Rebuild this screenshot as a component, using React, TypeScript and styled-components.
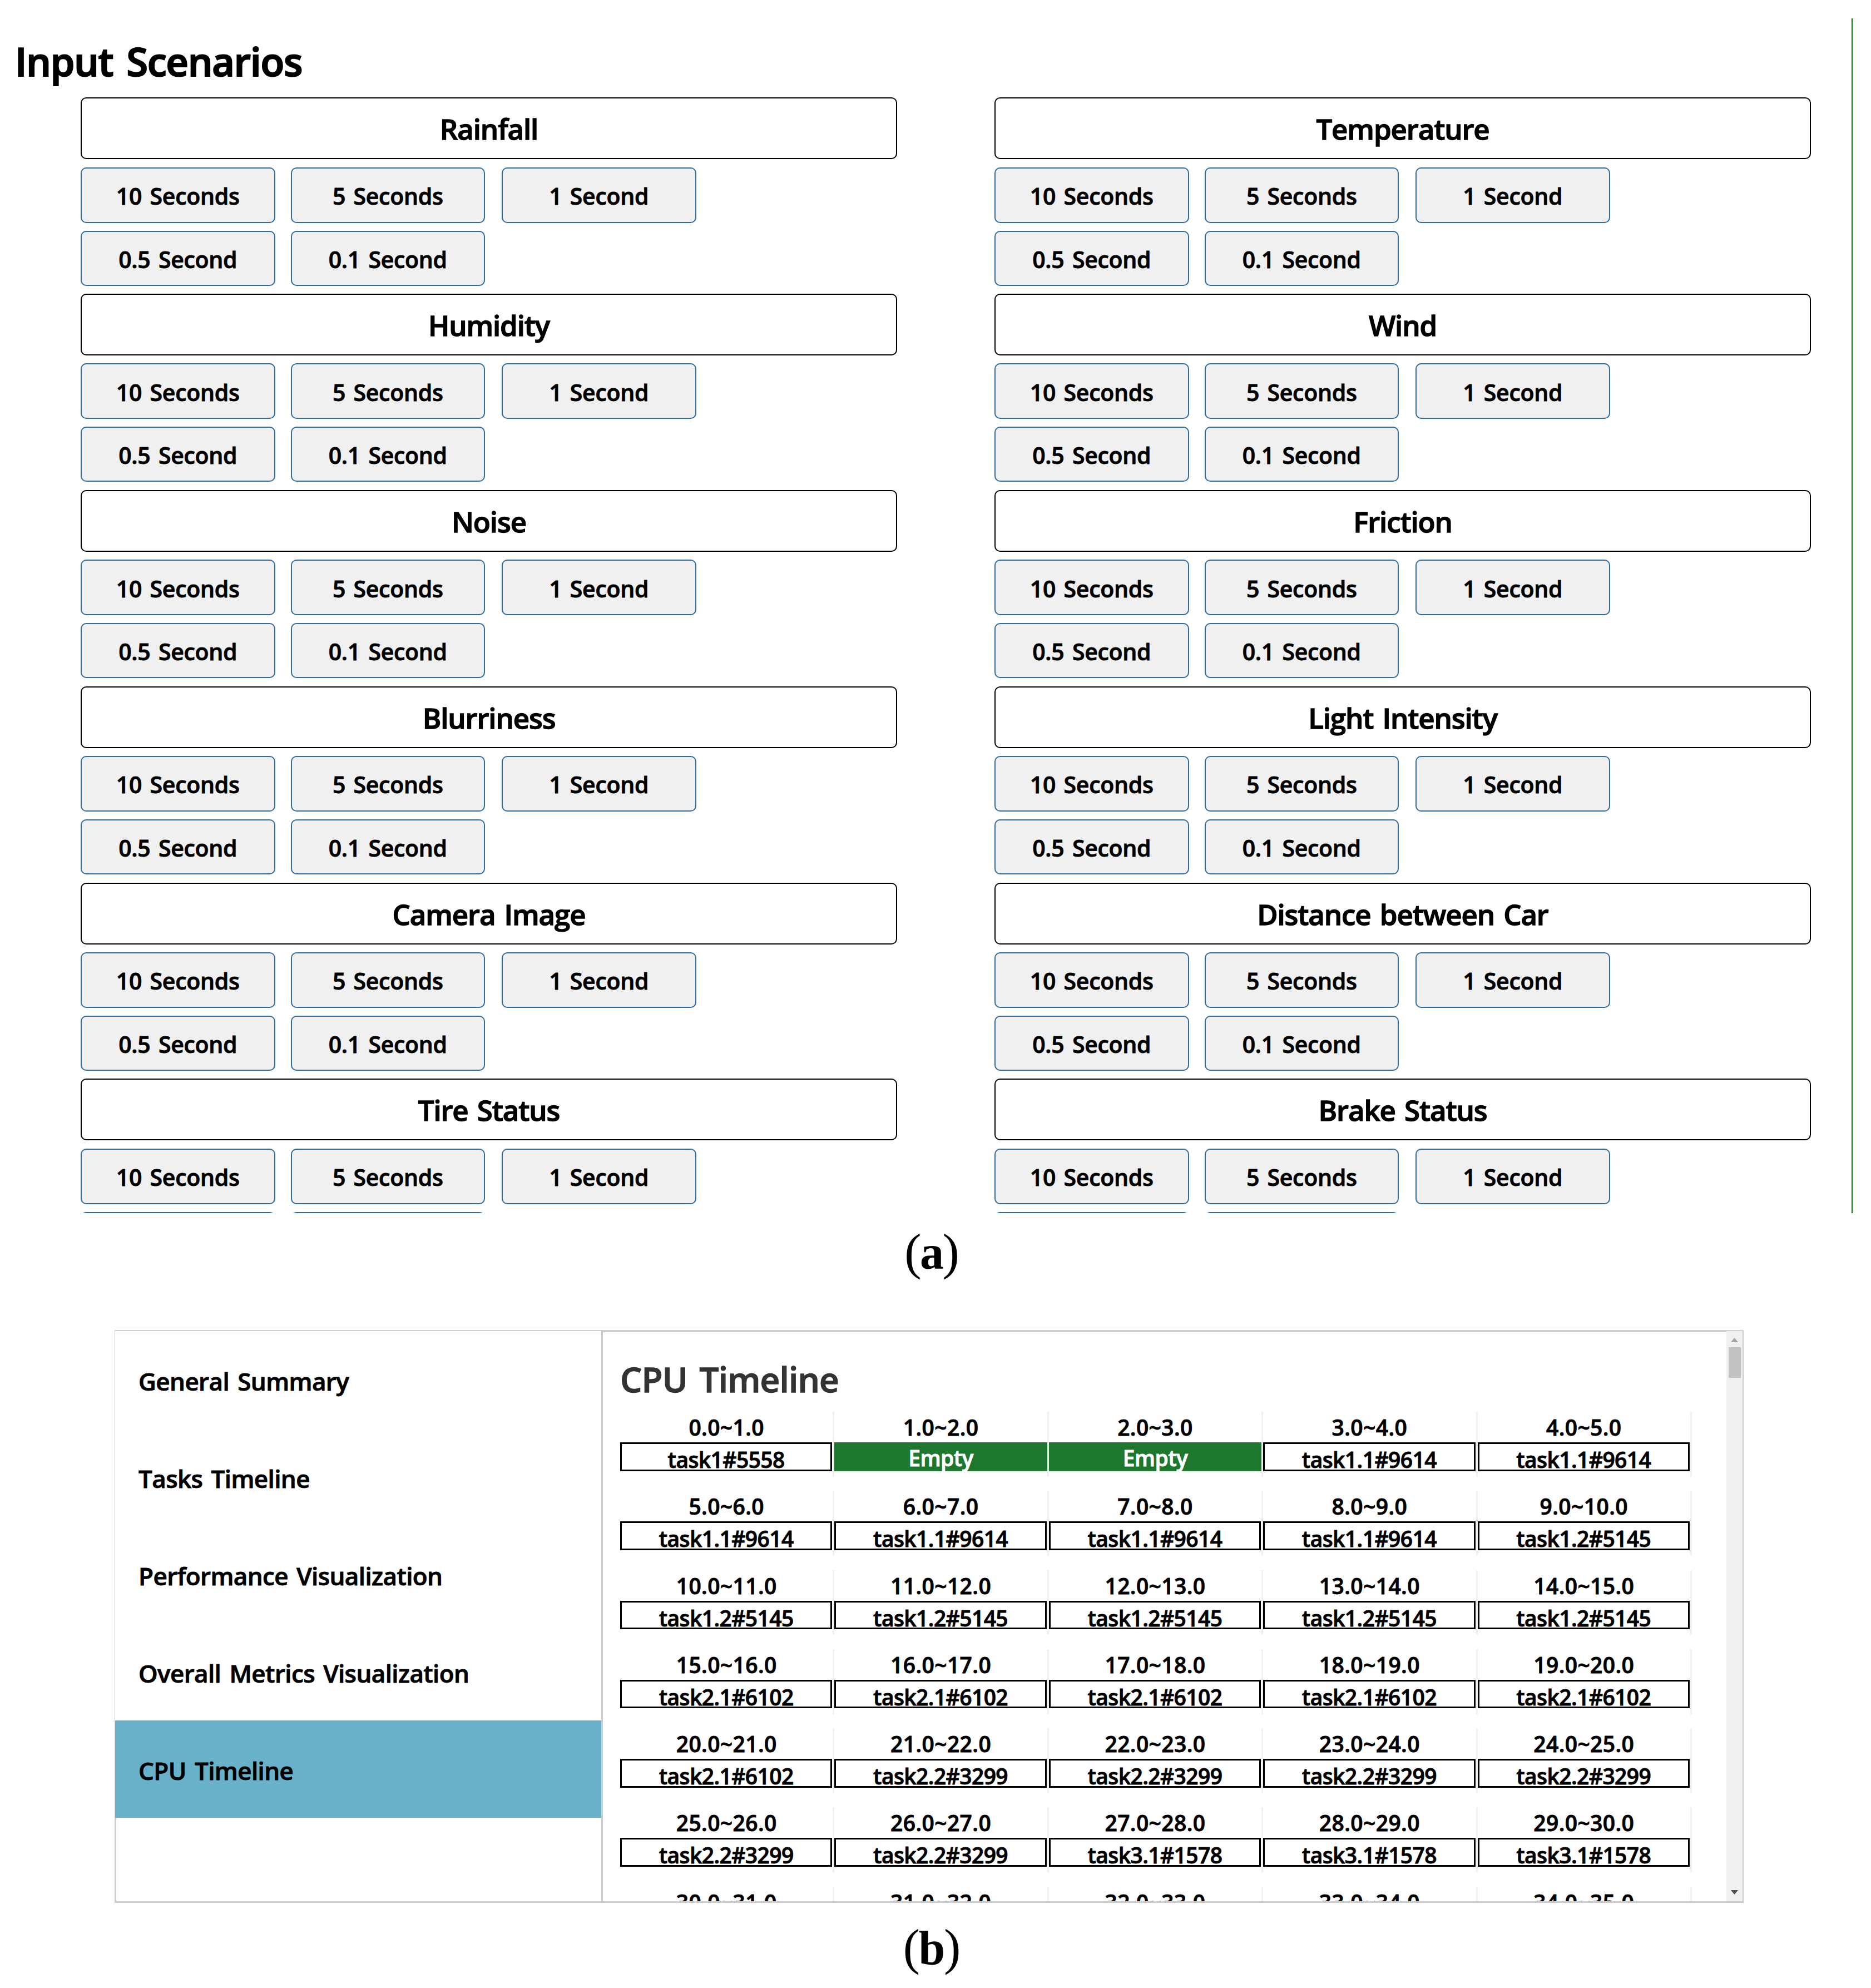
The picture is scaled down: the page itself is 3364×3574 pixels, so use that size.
import { useState } from "react";
import styled, { createGlobalStyle } from "styled-components";

const GlobalStyle = createGlobalStyle`
  * {
    box-sizing: border-box;
  }

  body {
    margin: 0;
    background: #fff;
    color: #000;
    font-family: "Open Sans", "Noto Sans", sans-serif;
    font-weight: 600;
    -webkit-text-stroke-width: 0.9px;
    overflow: hidden;
  }
`;

const Page = styled.main`
  width: 3364px;
  height: 3574px;
  overflow: hidden;
`;

const ScenarioPanel = styled.section`
  width: 3331px;
  height: 2148px;
  margin-top: 33px;
  overflow: hidden;
  border-right: 2px solid #008000;
`;

const ScenarioTitle = styled.h1`
  height: 142.4px;
  margin: 0;
  padding: 12px 0 0 27px;
  font-size: 70px;
  font-weight: 600;
  line-height: 130px;
  letter-spacing: -0.015em;
  word-spacing: 0.1em;
  -webkit-text-stroke-width: 2.2px;
`;

const ScenarioGrid = styled.div`
  display: grid;
  grid-template-columns: 1468px 1468px;
  column-gap: 175px;
  padding-left: 145px;
`;

const Scenario = styled.div`
  height: 352.8px;
`;

const ScenarioName = styled.h2`
  height: 111px;
  margin: 0 0 14.2px;
  padding-top: 2px;
  border: 2px solid #000;
  border-radius: 10px;
  font-size: 51px;
  font-weight: 600;
  line-height: 104px;
  letter-spacing: -0.022em;
  text-align: center;
  word-spacing: 0.08em;
  -webkit-text-stroke-width: 1.3px;
`;

const PeriodList = styled.div`
  display: grid;
  grid-template-columns: 377.5px 379.5px 349.5px;
  grid-template-rows: 100px 99px;
  row-gap: 14px;
`;

const PeriodButton = styled.button`
  width: 349.5px;
  padding: 3px 0 0;
  border: 2px solid #2e6da4;
  border-radius: 10px;
  background: #f0f0f0;
  color: #000;
  font-family: inherit;
  font-size: 41px;
  font-weight: 600;
  letter-spacing: -0.007em;
  word-spacing: 0.1em;
`;

const Caption = styled.p<{ $height: number; $line: number; $top?: number }>`
  width: 3351px;
  height: ${(props) => props.$height}px;
  margin: 0;
  padding-top: ${(props) => props.$top ?? 0}px;
  font-family: "Liberation Serif", serif;
  font-size: 91px;
  font-weight: 400;
  line-height: ${(props) => props.$line}px;
  text-align: center;
  -webkit-text-stroke-width: 0;

  b {
    margin: 0 -2.5px;
    font-size: 86px;
  }
`;

const ResultPanel = styled.section`
  display: flex;
  width: 2929px;
  height: 1030px;
  margin-left: 206px;
  overflow: hidden;
  border-style: solid;
  border-color: #d2d2d2 #ccc #ccc #ccc;
  border-width: 2px 2px 3px 1px;
`;

const SideMenu = styled.nav`
  width: 874px;
  border-left: 2px solid #ccc;
`;

const MenuItem = styled.div<{ $active: boolean }>`
  height: 175px;
  margin-left: -2px;
  padding: 6px 0 0 42px;
  background: ${(props) => (props.$active ? "#69b1c9" : "#fff")};
  font-size: 44px;
  line-height: 168px;
  letter-spacing: -0.014em;
  word-spacing: 0.1em;
  cursor: pointer;
`;

const Timeline = styled.div`
  width: 2023px;
  padding-left: 31px;
  overflow: hidden;
  border-top: 2px solid #ccc;
  border-left: 3px solid #ccc;
`;

const TimelineTitle = styled.h2`
  height: 143px;
  margin: 0;
  padding-top: 26px;
  color: #333;
  font-size: 62px;
  font-weight: 600;
  line-height: 117px;
  letter-spacing: -0.013em;
  word-spacing: 0.1em;
  -webkit-text-stroke-width: 1.3px;
`;

const TimelineGrid = styled.div`
  display: grid;
  grid-template-columns: repeat(5, 385.4px);
  grid-auto-rows: 116.7px;
  row-gap: 25.6px;
`;

const Cell = styled.div`
  border-right: 3px solid #f0f0f0;
  font-size: 39px;
  text-align: center;
`;

const CellTime = styled.div`
  height: 55px;
  line-height: 55px;
  letter-spacing: 0.01em;
`;

const CellTask = styled.div<{ $empty: boolean }>`
  height: 51.5px;
  margin-right: ${(props) => (props.$empty ? 0 : 1)}px;
  border: ${(props) => (props.$empty ? "none" : "3px solid #000")};
  background: ${(props) => (props.$empty ? "#1d772e" : "#fff")};
  color: ${(props) => (props.$empty ? "#fff" : "#000")};
  line-height: 56px;
  letter-spacing: -0.015em;
`;

const ScrollBar = styled.div`
  display: flex;
  flex-direction: column;
  align-items: center;
  width: 29px;
  padding: 12px 0;
  background: #f0f0f0;
`;

const ScrollThumb = styled.div`
  width: 22px;
  height: 55px;
  margin: 9px 0 auto;
  background: #c1c1c1;
`;

const scenarios = [
  "Rainfall",
  "Temperature",
  "Humidity",
  "Wind",
  "Noise",
  "Friction",
  "Blurriness",
  "Light Intensity",
  "Camera Image",
  "Distance between Car",
  "Tire Status",
  "Brake Status",
];

const periods = ["10 Seconds", "5 Seconds", "1 Second", "0.5 Second", "0.1 Second"];

const menus = [
  "General Summary",
  "Tasks Timeline",
  "Performance Visualization",
  "Overall Metrics Visualization",
  "CPU Timeline",
];

// [task, how many seconds it keeps the CPU]
const schedule: [string, number][] = [
  ["task1#5558", 1],
  ["Empty", 2],
  ["task1.1#9614", 6],
  ["task1.2#5145", 6],
  ["task2.1#6102", 6],
  ["task2.2#3299", 6],
  ["task3.1#1578", 8],
];

const slots = schedule.flatMap(([task, seconds]) => Array<string>(seconds).fill(task));

function App() {
  const [menu, setMenu] = useState("CPU Timeline");

  return (
    <>
      <GlobalStyle />
      <Page>
        <ScenarioPanel>
          <ScenarioTitle>Input Scenarios</ScenarioTitle>
          <ScenarioGrid>
            {scenarios.map((name) => (
              <Scenario key={name}>
                <ScenarioName>{name}</ScenarioName>
                <PeriodList>
                  {periods.map((period) => (
                    <PeriodButton key={period}>{period}</PeriodButton>
                  ))}
                </PeriodList>
              </Scenario>
            ))}
          </ScenarioGrid>
        </ScenarioPanel>
        <Caption $height={210} $line={140}>
          (<b>a</b>)
        </Caption>
        <ResultPanel>
          <SideMenu>
            {menus.map((item) => (
              <MenuItem key={item} $active={item === menu} onClick={() => setMenu(item)}>
                {item}
              </MenuItem>
            ))}
          </SideMenu>
          <Timeline>
            <TimelineTitle>CPU Timeline</TimelineTitle>
            <TimelineGrid>
              {slots.map((task, i) => (
                <Cell key={i}>
                  <CellTime>
                    {i}.0~{i + 1}.0
                  </CellTime>
                  <CellTask $empty={task === "Empty"}>{task}</CellTask>
                </Cell>
              ))}
            </TimelineGrid>
          </Timeline>
          <ScrollBar>
            <svg width="13" height="8" viewBox="0 0 13 8">
              <path d="M6.5 0 13 8H0z" fill="#a3a3a3" />
            </svg>
            <ScrollThumb />
            <svg width="13" height="8" viewBox="0 0 13 8">
              <path d="M0 0h13L6.5 8z" fill="#505050" />
            </svg>
          </ScrollBar>
        </ResultPanel>
        <Caption $height={153} $line={149} $top={5}>
          (<b>b</b>)
        </Caption>
      </Page>
    </>
  );
}

export default App;
